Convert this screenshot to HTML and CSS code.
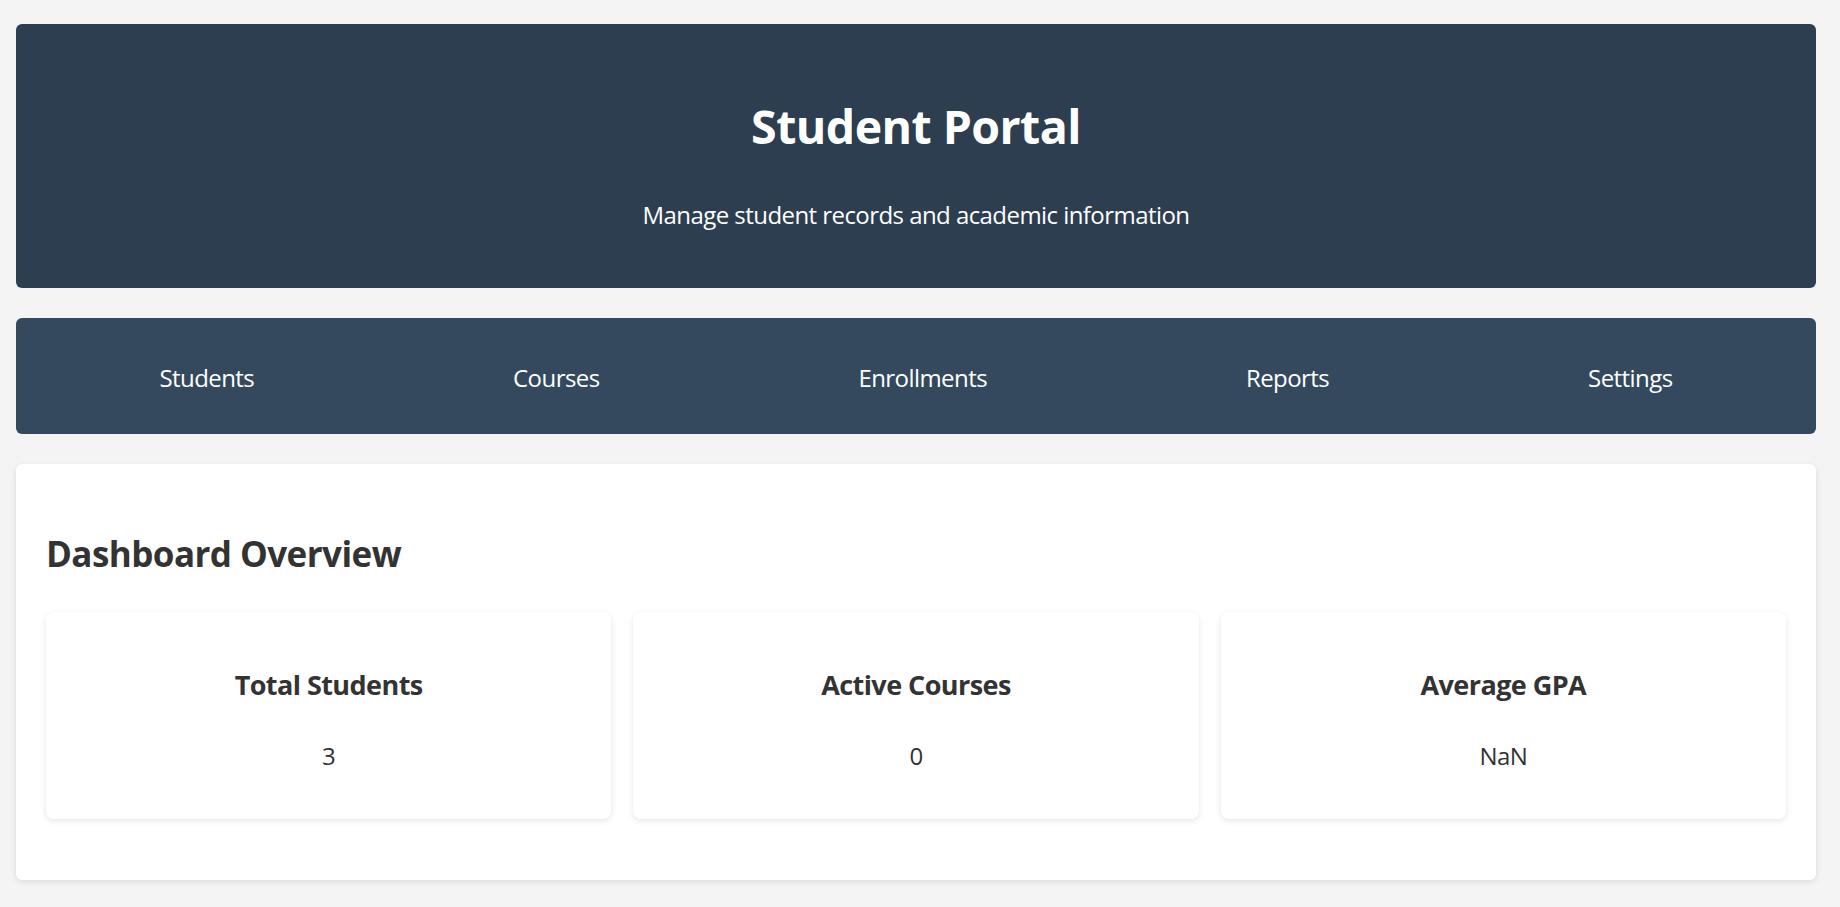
FILE: index.html
```html
<!DOCTYPE html>
<html lang="en">
<head>
<meta charset="utf-8">
<title>Student Portal</title>
<link rel="stylesheet" href="styles.css">
</head>
<body>
<div class="app">
  <header class="hero">
    <h1 class="hero-title">Student Portal</h1>
    <p class="hero-sub">Manage student records and academic information</p>
  </header>
  <nav class="nav">
    <a class="nav-link" href="#">Students</a>
    <a class="nav-link" href="#">Courses</a>
    <a class="nav-link" href="#">Enrollments</a>
    <a class="nav-link" href="#">Reports</a>
    <a class="nav-link" href="#">Settings</a>
  </nav>
  <main class="panel">
    <h2 class="panel-title">Dashboard Overview</h2>
    <div class="stats">
      <div class="stat">
        <h3 class="stat-title">Total Students</h3>
        <p class="stat-value">3</p>
      </div>
      <div class="stat">
        <h3 class="stat-title">Active Courses</h3>
        <p class="stat-value">0</p>
      </div>
      <div class="stat">
        <h3 class="stat-title">Average GPA</h3>
        <p class="stat-value">NaN</p>
      </div>
    </div>
  </main>
</div>
</body>
</html>
```

FILE: styles.css
```css
* { box-sizing: border-box; }

html, body {
  margin: 0;
  padding: 0;
}

body {
  background: #f4f4f4;
  font-family: "Open Sans", "Noto Sans", "Liberation Sans", sans-serif;
  color: #333333;
  letter-spacing: -0.035em;
}

.app {
  width: 1800px;
  margin: 0 0 0 16px;
  padding: 24px 0 24px;
  display: flex;
  flex-direction: column;
  gap: 30px;
}

.hero {
  background: #2c3e50;
  color: #ffffff;
  border-radius: 6px;
  padding: 70px 20px 57px;
  text-align: center;
}

.hero-title {
  margin: 0 0 41px;
  font-size: 46.5px;
  line-height: 64px;
  font-weight: 700;
}

.hero-sub {
  margin: 0;
  font-size: 24px;
  line-height: 32px;
}

.nav {
  background: #34495e;
  border-radius: 6px;
  padding: 44px 14px 40px;
  display: flex;
  justify-content: space-around;
}

.nav-link {
  color: #ffffff;
  text-decoration: none;
  font-size: 24px;
  line-height: 32px;
}

.panel {
  background: #ffffff;
  border-radius: 6px;
  box-shadow: 0 2px 6px rgba(0, 0, 0, 0.1);
  padding: 36px 30px 36px;
}

.panel-title {
  margin: 30px 0 34px;
  font-size: 35px;
  line-height: 48px;
  font-weight: 700;
}

.stats {
  display: grid;
  grid-template-columns: repeat(3, 1fr);
  gap: 22px;
  margin-bottom: 25px;
}

.stat {
  background: #ffffff;
  border-radius: 8px;
  box-shadow: 0 2px 6px rgba(0, 0, 0, 0.1);
  padding: 24px;
  text-align: center;
}

.stat-title {
  margin: 31px 0 37px;
  font-size: 27px;
  line-height: 36px;
  font-weight: 700;
}

.stat-value {
  margin: 0 0 23px;
  font-size: 24px;
  line-height: 32px;
}
```
